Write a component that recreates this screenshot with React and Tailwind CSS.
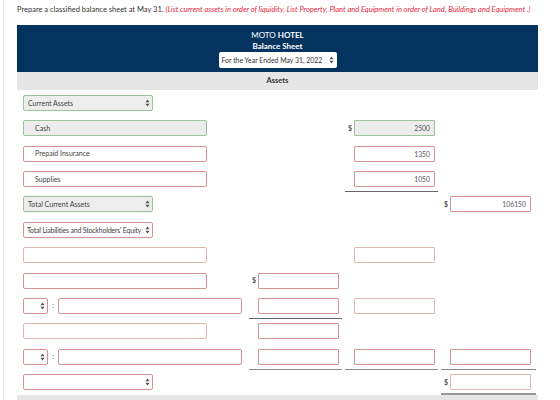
import React from "react";

// Small up/down arrow used by the select boxes
function Arrows() {
  return (
    <svg width="5" height="8" viewBox="0 0 5 8" className="shrink-0">
      <polygon points="2.5,0.5 4.6,3.2 0.4,3.2" fill="#555" />
      <polygon points="0.4,4.8 4.6,4.8 2.5,7.5" fill="#555" />
    </svg>
  );
}

const GREEN = "border-[#9cc49c] bg-[#ededed]";
const RED = "border-[#d69393] bg-white";
const PINK = "border-[#e2b5b5] bg-white";

function Select({ text = "", tone = RED, width = "w-[130px]", tight }) {
  return (
    <div
      className={`${width} h-[16px] border rounded-[2px] ${tone} flex items-center justify-between gap-[1px] ${
        tight ? "pl-[3px]" : "pl-[4px]"
      } pr-[2px] overflow-hidden`}
    >
      <span className={`text-[7px] ${tight ? "tracking-[-0.2px]" : ""} text-[#444] whitespace-nowrap`}>{text}</span>
      <Arrows />
    </div>
  );
}

function LabelInput({ text = "", tone = RED, width = "w-[184px]" }) {
  return (
    <div className={`${width} h-[16px] border rounded-[2px] ${tone} flex items-center pl-[11px]`}>
      <span className="text-[7px] text-[#444] whitespace-nowrap">{text}</span>
    </div>
  );
}

// One money column: optional "$", optional input, optional rule below
function Money({ show, dollar, value = "", tone = RED, rule }) {
  const ruleCls =
    rule === "single"
      ? "border-b border-[#666]"
      : rule === "light"
      ? "border-b border-[#888]"
      : rule === "double"
      ? "border-b-2 border-[#9a9a9a]"
      : "border-b border-transparent";
  return (
    <div className={`h-full ml-[1px] mr-[2px] pt-[4px] ${show || rule ? ruleCls : ""}`}>
      {show && (
        <div className="flex items-center h-[16px] pl-[3px]">
          <span className="w-[6px] text-[7px] font-bold text-[#555]">{dollar ? "$" : ""}</span>
          <div
            className={`w-[81px] h-[16px] border rounded-[1px] ${tone} flex items-center justify-end pr-[4px] text-[6.8px] text-[#555]`}
          >
            {value}
          </div>
        </div>
      )}
    </div>
  );
}

const rows = [
  { label: <Select text="Current Assets" tone={GREEN} /> },
  {
    label: <LabelInput text="Cash" tone={GREEN} />,
    c3: { show: true, dollar: true, value: "2500", tone: GREEN },
  },
  {
    label: <LabelInput text="Prepaid Insurance" />,
    c3: { show: true, value: "1350" },
  },
  {
    label: <LabelInput text="Supplies" />,
    c3: { show: true, value: "1050", rule: "single" },
  },
  {
    label: <Select text="Total Current Assets" tone={GREEN} />,
    c4: { show: true, dollar: true, value: "106150" },
  },
  { label: <Select text="Total Liabilities and Stockholders' Equity" tight /> },
  {
    label: <LabelInput tone={PINK} />,
    c3: { show: true, tone: PINK },
  },
  {
    label: <LabelInput />,
    c2: { show: true, dollar: true },
  },
  {
    split: true,
    c2: { show: true, rule: "single" },
    c3: { show: true, tone: PINK },
  },
  {
    label: <LabelInput tone={PINK} />,
    c2: { show: true },
  },
  {
    split: true,
    c2: { show: true, rule: "light" },
    c3: { show: true, rule: "light" },
    c4: { show: true, rule: "light" },
  },
  {
    label: <Select />,
    c4: { show: true, dollar: true, tone: PINK, rule: "double" },
  },
];

export default function App() {
  return (
    <div className="w-[560px] h-[400px] overflow-hidden bg-white font-['Lato',sans-serif]">
      <div className="ml-[3px] h-full border-l border-[#ececec] pl-[13px] pt-[5px]">
        <p className="text-[7.5px] leading-[10px] text-[#333] whitespace-nowrap">
          Prepare a classified balance sheet at May 31.{" "}
          <span className="italic text-[#e8283c]">
            (List current assets in order of liquidity. List Property, Plant and Equipment in order of Land,
            Buildings and Equipment .)
          </span>
        </p>

        <div className="w-[521px] mt-[10px]">
          {/* Heading */}
          <div className="h-[47px] bg-[#04335f] flex flex-col items-center pt-[5px] text-white text-[8px] leading-[11px]">
            <div>
              MOTO <span className="font-bold">HOTEL</span>
            </div>
            <div className="font-bold">Balance Sheet</div>
            <div className="w-[118px] h-[16px] bg-white rounded-[2px] flex items-center justify-between pl-[3px] pr-[3px]">
              <span className="text-[6.9px] text-[#333] whitespace-nowrap">For the Year Ended May 31, 2022</span>
              <Arrows />
            </div>
          </div>
          <div className="h-[18px] bg-[#e6e6e6] flex items-center justify-center text-[7.5px] font-bold text-[#333]">
            Assets
          </div>

          {/* Rows */}
          <div className="pt-[1px]">
            {rows.map((r, i) => (
              <div key={i} className="grid grid-cols-[231px_96px_96px_98px] h-[25.36px]">
                <div className="pl-[6px] pt-[4px]">
                  {r.split ? (
                    <div className="flex items-center">
                      <Select width="w-[25px]" />
                      <span className="w-[10px] text-center text-[7px] text-[#555] leading-none">:</span>
                      <LabelInput />
                    </div>
                  ) : (
                    r.label
                  )}
                </div>
                <Money {...(r.c2 || {})} />
                <Money {...(r.c3 || {})} />
                <Money {...(r.c4 || {})} />
              </div>
            ))}
          </div>
          <div className="h-[10px] bg-[#e6e6e6]" />
        </div>
      </div>
    </div>
  );
}
